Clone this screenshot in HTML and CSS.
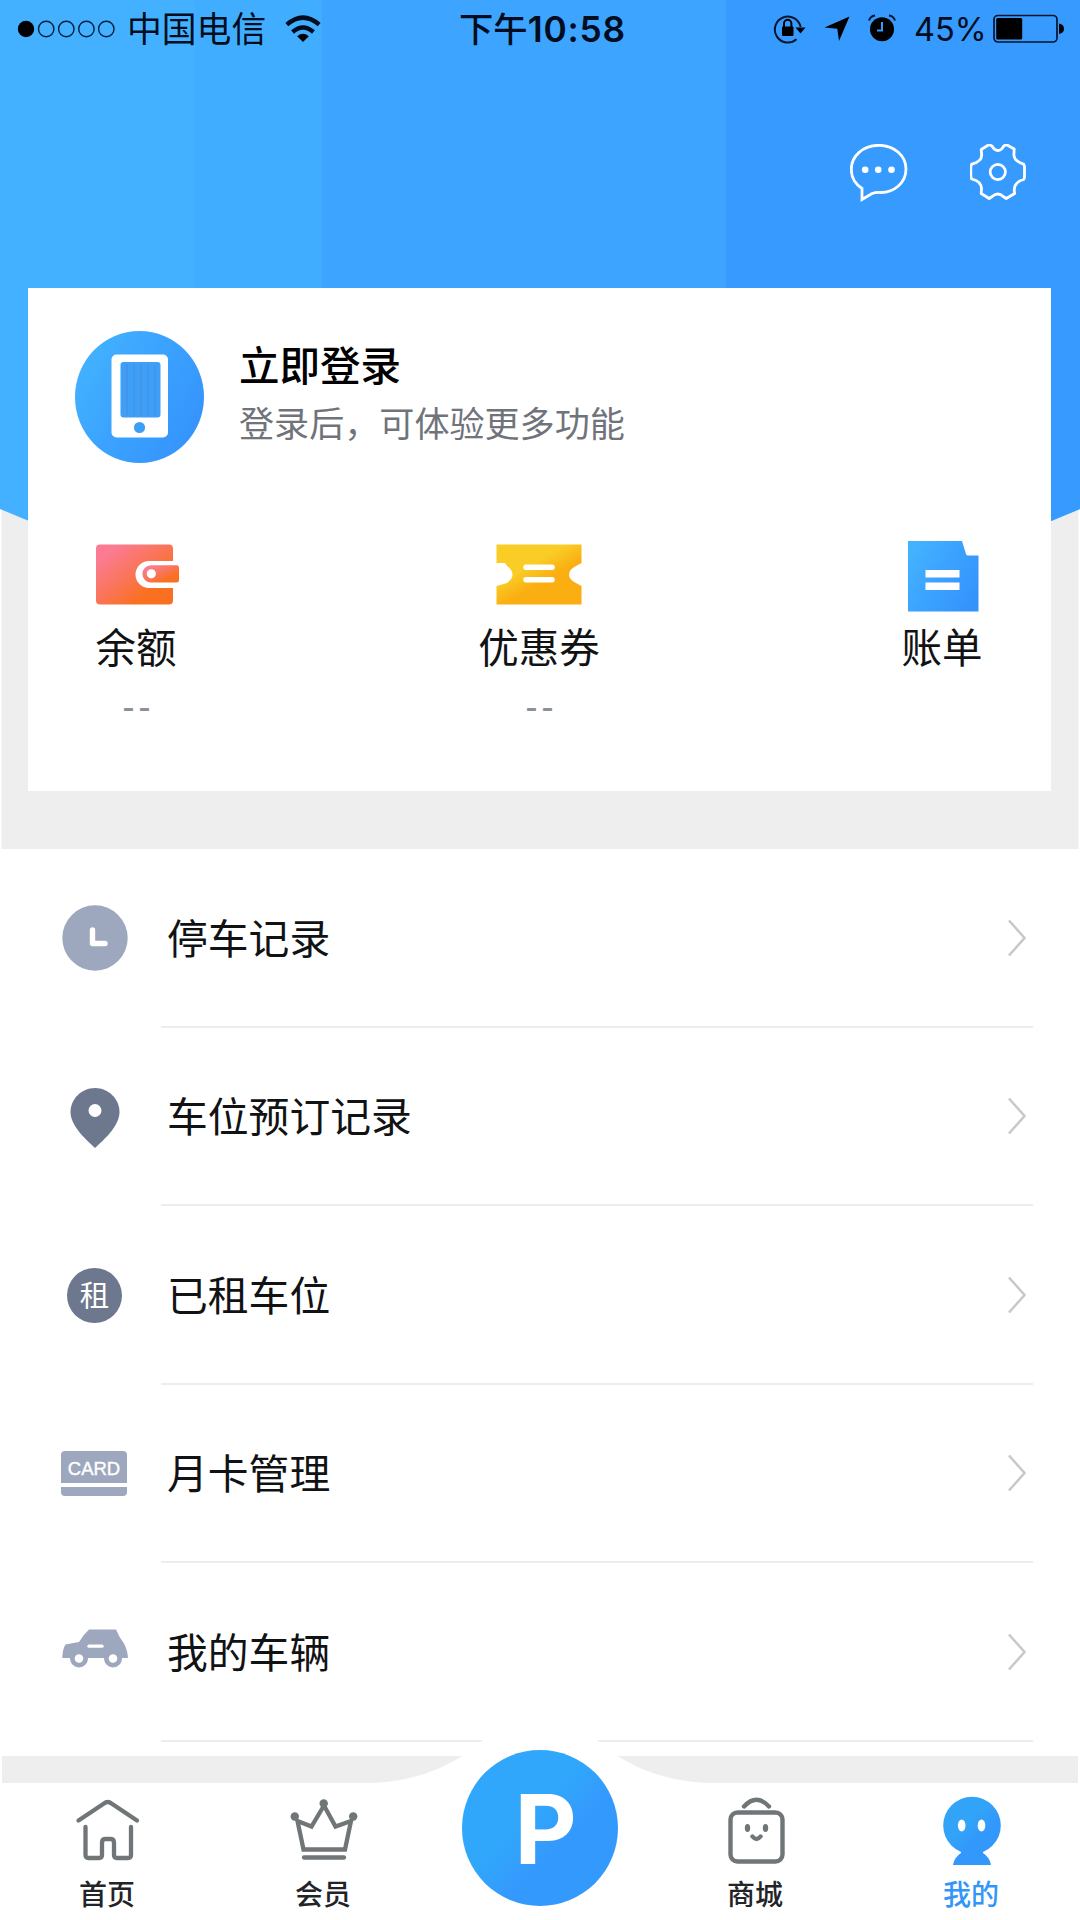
FILE: index.html
```html
<!DOCTYPE html>
<html lang="zh-CN">
<head>
<meta charset="utf-8">
<title>我的</title>
<link rel="stylesheet" href="styles.css">
</head>
<body>
<div class="app">
  <section class="profile">
    <svg class="backdrop" viewBox="0 0 1080 849" aria-hidden="true">
      <defs>
        <clipPath id="hero"><path d="M0 0H1080V509Q540 740 0 509Z"/></clipPath>
      </defs>
      <path d="M.5 509V849M1079.500 509V849" stroke="#fff" stroke-width="2"/>
      <g clip-path="url(#hero)">
        <rect width="1080" height="849" fill="#43b1ff"/>
        <rect x="195" width="127" height="849" fill="#41adff"/>
        <rect x="322" width="404" height="849" fill="#3da5ff"/>
        <rect x="726" width="354" height="849" fill="#379aff"/>
      </g>
    </svg>

    <header class="status">
      <div class="carrier">
        <svg width="98" height="20" viewBox="0 0 98 20">
          <circle cx="9" cy="10" r="8.2"/>
          <g fill="none" stroke="#06203f" stroke-width="1.4"><circle cx="29.2" cy="10" r="7.7"/><circle cx="49.3" cy="10" r="7.7"/><circle cx="69.4" cy="10" r="7.7"/><circle cx="89.3" cy="10" r="7.7"/></g>
        </svg>
        <span class="carrier-name">中国电信</span>
        <svg class="wifi" width="36" height="28" viewBox="0 0 36 28">
          <g fill="none" stroke="#000d20" stroke-width="4.400"><path d="M1.800 9.700Q18-4.500 34.200 9.700"/><path d="M7.500 17Q18 8 28.500 17"/></g>
          <path d="M12.200 21.200Q18 16.500 23.800 21.200L18 27Z"/>
        </svg>
      </div>
      <div class="time">下午<span>10:58</span></div>
      <div class="indicators">
        <svg width="34" height="32" viewBox="0 0 34 32">
          <path d="M23.5 26.3A13 13 0 1 1 27.6 14" fill="none" stroke="#06152b" stroke-width="2"/>
          <path d="M22.5 14.5h10l-5 6z"/>
          <rect x="9" y="13.5" width="11.5" height="9.5" rx="1"/>
          <path d="M11 14v-3.500a3.700 3.700 0 0 1 7.400 0V14" fill="none" stroke="#000" stroke-width="2"/>
        </svg>
        <svg class="locate" width="26" height="26" viewBox="0 0 26 26"><path d="M25.500 .5 15 25 13.300 12.800 .5 11.500Z"/></svg>
        <svg class="alarm" width="28" height="28" viewBox="0 0 28 28">
          <circle cx="14" cy="15.300" r="12"/>
          <path d="M1 6.500Q2.500 2 7 1.500M21 1.500Q25.500 2 27 6.500" fill="none" stroke="#06152b" stroke-width="2"/>
          <path d="M14 8v8.500H9" fill="none" stroke="#379aff" stroke-width="2"/>
        </svg>
        <span class="percent">45%</span>
        <svg width="72" height="30" viewBox="0 0 72 30">
          <rect x="1" y="1.500" width="63" height="26.500" rx="4" fill="none" stroke="#06152b" stroke-width="1.700"/>
          <rect x="3.200" y="4" width="26" height="21.500" rx="1.500"/>
          <path d="M66 9.500q5 1 5 5.300t-5 5.300z"/>
        </svg>
      </div>
    </header>

    <nav class="actions">
      <svg width="58" height="58" viewBox="0 0 58 58">
        <path d="M12 55.500V44.500C4.500 39.500 1.300 33 1.300 25.500 1.300 12 13 1.300 28.800 1.300S56 12 56 25C56 39 44 48.500 31 48.500Q26 48 22 49.500Z" fill="none" stroke="#fff" stroke-width="2.800"/>
        <g fill="#fff"><circle cx="15.200" cy="25.700" r="3.300"/><circle cx="28.200" cy="25.700" r="3.300"/><circle cx="41.500" cy="25.700" r="3.300"/></g>
      </svg>
      <svg width="58" height="58" viewBox="0 0 58 58">
        <g transform="translate(-.8 -1.500)" fill="none" stroke="#fff" stroke-width="2.800" stroke-linejoin="round">
          <path d="M20 2 23 3.700Q25 8 28.700 8T34.300 3.700L37 2 45 6.500 44.700 12.500C45 18 49 20 54.500 21.700L55.300 24V35L54.500 37C49 38.500 45 42.500 45 48L45.500 51 37 56 34 54Q31.500 51.500 28.700 51.500T23 54L20 56 12 51 12.300 46C12 41 9 38 2.500 36.500L1.600 34V24L2.500 21.700C9 20 12.500 17.500 12.500 12.500L12 7Z"/>
          <circle cx="28.600" cy="29.500" r="7.600"/>
        </g>
      </svg>
    </nav>

    <div class="card">
      <div class="login">
        <svg width="130" height="132" viewBox="0 0 130 132">
          <defs><linearGradient id="blue" x1="0" y1=".2" x2="1" y2=".8"><stop offset="0" stop-color="#43b3fe"/><stop offset=".45" stop-color="#3ba3ff"/><stop offset="1" stop-color="#3492fb"/></linearGradient></defs>
          <ellipse cx="64.500" cy="66" rx="64.500" ry="66" fill="url(#blue)"/>
          <rect x="36.500" y="23.500" width="56.500" height="83" rx="5" fill="#fff"/>
          <rect x="45.500" y="31" width="40" height="55.500" rx="3" fill="#3d9ff8"/>
          <path d="M52 33V85M59 33V85M66 33V85M73 33V85M80 33V85" stroke="#4a90dc" stroke-width="1.200"/>
          <circle cx="64.500" cy="96.500" r="5.600" fill="#3e9ef5"/>
        </svg>
        <div class="login-text">
          <h1>立即登录</h1>
          <p>登录后，可体验更多功能</p>
        </div>
      </div>
      <div class="assets">
        <div class="asset">
          <svg width="84" height="70" viewBox="0 0 84 70">
            <defs><linearGradient id="coral" x1="0" y1="0" x2="1" y2="1"><stop offset=".15" stop-color="#fb7b92"/><stop offset=".45" stop-color="#fa755d"/><stop offset=".75" stop-color="#f97020"/></linearGradient></defs>
            <path d="M5 3.500H74a4 4 0 0 1 4 4V20H54a13.500 13.500 0 0 0 0 27H78V59.500a4 4 0 0 1-4 4H5a4 4 0 0 1-4-4V7.500a4 4 0 0 1 4-4Z" fill="url(#coral)"/>
            <path d="M56 24.300H81.500a2.500 2.500 0 0 1 2.500 2.500V39a2.500 2.500 0 0 1-2.500 2.500H56a8.600 8.600 0 0 1 0-17.200Z" fill="url(#coral)"/>
            <circle cx="56.300" cy="32.800" r="4.600" fill="#fff"/>
          </svg>
          <span>余额</span><em>--</em>
        </div>
        <div class="asset">
          <svg width="84" height="70" viewBox="0 0 84 70">
            <defs><linearGradient id="gold" x1=".1" y1="0" x2=".9" y2="1"><stop offset=".35" stop-color="#f9cd26"/><stop offset=".6" stop-color="#faae12"/></linearGradient></defs>
            <path d="M-1.500 3.500H83.500V22L77 25.500Q71 29 71 33.500T77 41.500L83.500 45V63.500H-1.500V45L9 42Q14.500 38 14.500 33.500T9 25L7 22H-1.500Z" fill="url(#gold)"/>
            <path d="M28 26.200H54M28 38.700H54" stroke="#fff" stroke-width="5.500" stroke-linecap="round"/>
          </svg>
          <span>优惠券</span><em>--</em>
        </div>
        <div class="asset">
          <svg width="70" height="70" viewBox="0 0 70 70">
            <path d="M0 0H54L58 13Q58.500 14.500 60 14.500H70.500V70.500H0Z" fill="url(#blue)"/>
            <path d="M17.500 29H51.500V36.500H17.500ZM17.500 41.500H51.500V49H17.500Z" fill="#fff"/>
          </svg>
          <span>账单</span>
        </div>
      </div>
    </div>
  </section>

  <ul class="menu">
    <li><div class="icon"><svg width="66" height="66" viewBox="0 0 66 66"><circle cx="33" cy="33" r="32.700" fill="#9da7bd"/><path d="M30.500 25V38.500H43" fill="none" stroke="#fff" stroke-width="5.400" stroke-linecap="round" stroke-linejoin="round"/></svg></div>
      <div class="row"><span>停车记录</span><svg class="chevron" width="18" height="38" viewBox="0 0 18 38"><path d="M1 1.500 16.500 19 1 36.500"/></svg></div></li>
    <li><div class="icon"><svg class="pin" width="50" height="62" viewBox="0 0 50 62"><path d="M25 1C38.500 1 49.500 12 49.500 25 49.500 38 36 51 25 61 14 51 .5 38 .5 25 .5 12 11.500 1 25 1Z" fill="#6d778d"/><circle cx="25" cy="23.500" r="6.500" fill="#fff"/></svg></div>
      <div class="row"><span>车位预订记录</span><svg class="chevron" width="18" height="38" viewBox="0 0 18 38"><path d="M1 1.500 16.500 19 1 36.500"/></svg></div></li>
    <li><div class="icon"><div class="rent">租</div></div>
      <div class="row"><span>已租车位</span><svg class="chevron" width="18" height="38" viewBox="0 0 18 38"><path d="M1 1.500 16.500 19 1 36.500"/></svg></div></li>
    <li><div class="icon"><div class="month-card"><b>CARD</b><i></i></div></div>
      <div class="row"><span>月卡管理</span><svg class="chevron" width="18" height="38" viewBox="0 0 18 38"><path d="M1 1.500 16.500 19 1 36.500"/></svg></div></li>
    <li><div class="icon"><svg class="car" width="66" height="40" viewBox="0 0 66 40"><path d="M27 .5H54Q57 8 62 14.500 65.500 21 66 29H.3Q.5 20 3.500 15.500L17 13Q22 5 27 .5Z" fill="#9da7bd"/><circle cx="17" cy="29.500" r="9" fill="#9da7bd"/><circle cx="51" cy="29.500" r="9" fill="#9da7bd"/><circle cx="17" cy="29.500" r="4.300" fill="#fff"/><circle cx="51" cy="29.500" r="4.300" fill="#fff"/><path d="M27 17.200H40" stroke="#fff" stroke-width="3.300" stroke-linecap="round"/></svg></div>
      <div class="row"><span>我的车辆</span><svg class="chevron" width="18" height="38" viewBox="0 0 18 38"><path d="M1 1.500 16.500 19 1 36.500"/></svg></div></li>
  </ul>

  <div class="band"></div>

  <nav class="tabs">
    <svg class="hump" width="340" height="70" viewBox="0 0 340 70"><path d="M0 69C50 68 90 48 114 25A86 86 0 0 1 226 25C250 48 290 68 340 69V70H0Z" fill="#fff"/></svg>
    <a class="tab"><svg width="72" height="72" viewBox="0 0 72 72"><g fill="none" stroke="#707678" stroke-width="4.300" stroke-linecap="round" stroke-linejoin="round"><path d="M6.500 24.500 32 7.500Q35.700 4.500 39.500 7.500L65 24.500"/><path d="M13.500 31V59Q13.500 62 16.500 62H27Q30 62 30 59V47Q30 43 33 43H39Q42 43 42 47V59Q42 62 45 62H56Q59 62 59 59V31"/></g></svg><span>首页</span></a>
    <a class="tab"><svg width="72" height="72" viewBox="0 0 72 72"><g fill="none" stroke="#707678" stroke-width="4.300"><path d="M9.500 25 23.500 30.500 36 9.500 47.500 30.500 63 25 57 53.500H15.500Z"/><path d="M16 61.500H56" stroke-linecap="round"/></g><g fill="#707678"><circle cx="6.800" cy="20.500" r="4.200"/><circle cx="35.700" cy="7.500" r="4.200"/><circle cx="65.200" cy="20.500" r="4.200"/></g></svg><span>会员</span></a>
    <a class="park">P</a>
    <a class="tab"><svg width="72" height="72" viewBox="0 0 72 72"><g fill="none" stroke="#707678" stroke-width="4.400" stroke-linecap="round"><rect x="10.500" y="16.500" width="52" height="49" rx="7"/><path d="M24 10.500Q36.500-3 49 10.500M32.500 40.500Q36.500 45.500 40.500 40.500"/></g><g fill="#707678"><ellipse cx="27.500" cy="32" rx="2.700" ry="3.900"/><ellipse cx="45.500" cy="32" rx="2.700" ry="3.900"/></g></svg><span>商城</span></a>
    <a class="tab active"><svg width="72" height="72" viewBox="0 0 72 72"><defs><linearGradient id="me" gradientUnits="userSpaceOnUse" x1="8" y1="4" x2="62" y2="62"><stop offset=".4" stop-color="#31a4f8"/><stop offset=".65" stop-color="#3398fb"/></linearGradient></defs><g fill="url(#me)"><circle cx="36" cy="29.500" r="28.800"/><path d="M25 55H47V57Q54 61.500 55 69H17Q18 61.500 25 57Z"/></g><g fill="#fff"><ellipse cx="25.700" cy="29.500" rx="3.800" ry="5.900"/><ellipse cx="45.500" cy="29.500" rx="3.800" ry="5.900"/></g></svg><span>我的</span></a>
  </nav>
</div>
</body>
</html>
```
FILE: styles.css
```css
* {
  box-sizing: border-box;
  margin: 0;
  padding: 0;
}

body {
  width: 1080px;
  height: 1920px;
  overflow: hidden;
  background: #fff;
  font-family: "Liberation Sans", "Noto Sans CJK SC", sans-serif;
  color: #111214;
}

svg {
  display: block;
  flex: none;
}

.app {
  display: flex;
  flex-direction: column;
  height: 1920px;
}

/* Profile header */
.profile {
  position: relative;
  height: 849px;
  padding: 0 29px 0 28px;
  background: #eee;
}

.backdrop {
  position: absolute;
  inset: 0;
  width: 1080px;
  height: 849px;
}

.status {
  position: relative;
  display: grid;
  grid-template-columns: 1fr auto 1fr;
  align-items: center;
  height: 58px;
  margin: 0 -14px 0 -11px;
  color: #000d20;
}

.carrier,
.indicators {
  display: flex;
  align-items: center;
}

.carrier-name {
  margin: 1px 0 0 12px;
  font-size: 34.8px;
  line-height: 50px;
}

.wifi {
  margin-left: 19px;
}

.time {
  padding: 2px 0 0 3px;
  font-family: Inter, "Noto Sans CJK SC", sans-serif;
  font-size: 34.3px;
  font-weight: 500;
  line-height: 50px;
}

.time span {
  font-size: 35.3px;
  font-weight: 600;
  letter-spacing: 0.8px;
}

.indicators {
  justify-content: flex-end;
}

.locate {
  margin-left: 17px;
}

.alarm {
  margin: -3px 0 0 18px;
}

.percent {
  width: 70px;
  margin: 0 9px 0 18px;
  padding-top: 1px;
  font-family: Inter, sans-serif;
  font-size: 32.5px;
  white-space: nowrap;
}

.actions {
  position: relative;
  display: flex;
  justify-content: flex-end;
  gap: 62px;
  height: 230px;
  padding: 86px 23px 0 0;
}

.card {
  position: relative;
  height: 503px;
  padding: 43px 48px 0;
  background: #fff;
}

.login {
  display: flex;
  gap: 34px;
  margin-left: -1px;
}

.login-text {
  display: flex;
  flex-direction: column;
  padding-top: 7px;
}

.login-text h1 {
  font-size: 40.5px;
  font-weight: 500;
  line-height: 58px;
  color: #000;
}

.login-text p {
  font-size: 35.1px;
  line-height: 58px;
  color: #70747a;
}

.assets {
  display: flex;
  justify-content: space-between;
  margin-top: 78px;
}

.asset {
  display: flex;
  flex-direction: column;
  align-items: center;
  width: 121px;
}

.asset svg {
  overflow: visible;
}

.asset span {
  margin: 8px 1px 0 0;
  font-size: 40.5px;
  line-height: 60px;
  white-space: nowrap;
}

.asset em {
  margin: -2px -4px 0 0;
  font-size: 36px;
  font-style: normal;
  line-height: 60px;
  letter-spacing: 4px;
  color: #8b9098;
}

/* Menu list */
.menu {
  list-style: none;
  height: 907px;
}

.menu li {
  display: flex;
  height: 178.5px;
  padding: 0 47px 0 28px;
}

.icon {
  display: flex;
  align-items: center;
  justify-content: center;
  width: 133px;
}

.pin {
  margin-top: 2px;
}

.row {
  display: flex;
  flex: 1;
  align-items: center;
  justify-content: space-between;
  padding: 0 7px 0 6px;
  border-bottom: 2px solid #ededed;
}

.row span {
  padding-top: 5px;
  font-size: 40.8px;
  line-height: 60px;
}

.chevron {
  margin-top: 1px;
  fill: none;
  stroke: #c8c8c8;
  stroke-width: 2.5;
}

.rent {
  width: 55px;
  height: 55px;
  border-radius: 50%;
  background: #6d778d;
  color: #fff;
  font-size: 29.5px;
  line-height: 55px;
  text-align: center;
}

.month-card {
  display: flex;
  flex-direction: column;
  gap: 4px;
  width: 66px;
  margin: 0 1px 0 0;
}

.month-card b {
  height: 32px;
  border-radius: 4px 4px 0 0;
  background: #9da7bd;
  color: #fff;
  font-size: 18.5px;
  font-weight: 400;
  line-height: 36px;
  text-align: center;
  -webkit-text-stroke: 0.4px #fff;
}

.month-card i {
  height: 9px;
  border-radius: 0 0 4px 4px;
  background: #9da7bd;
}

.car {
  margin-top: -6px;
}

.band {
  height: 27px;
  margin: 0 2px;
  background: #eee;
}

/* Bottom tab bar */
.tabs {
  position: relative;
  display: grid;
  grid-template-columns: repeat(5, 216px);
  height: 137px;
  background: #fff;
}

.hump {
  position: absolute;
  left: 370px;
  top: -69px;
}

.tab {
  display: flex;
  flex-direction: column;
  align-items: center;
  padding: 13px 1px 0 0;
  color: #222427;
}

.tab span {
  margin: 7px 1px 0 0;
  font-size: 28px;
  font-weight: 500;
  line-height: 42px;
}

.tab.active {
  color: #3296f8;
}

.park {
  position: relative;
  justify-self: center;
  width: 156px;
  height: 156px;
  margin-top: -33px;
  padding-left: 11px;
  border-radius: 50%;
  background: linear-gradient(135deg, #30a7fa 42%, #3499fd 62%);
  color: #fff;
  font-family: Inter, sans-serif;
  font-size: 96px;
  font-weight: 700;
  line-height: 159px;
  text-align: center;
}
```
